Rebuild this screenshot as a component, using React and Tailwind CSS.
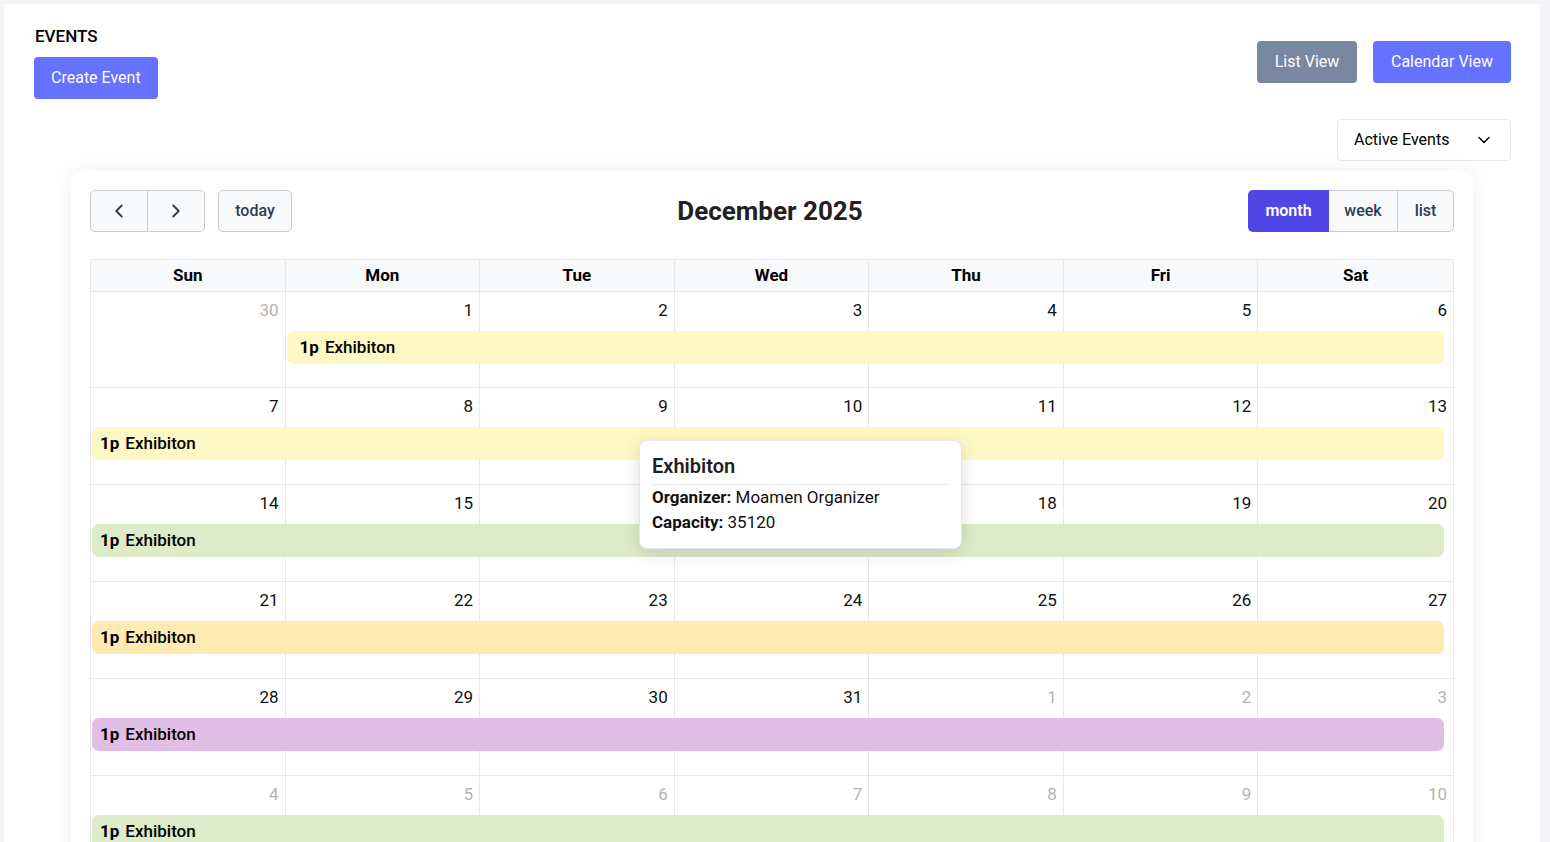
import { ChevronLeft, ChevronRight, ChevronDown } from 'lucide-react';

const weeks = [
  { days: [[30, true], [1], [2], [3], [4], [5], [6]], start: 2, color: 'bg-[#fef8c4]' },
  { days: [[7], [8], [9], [10], [11], [12], [13]], start: 1, color: 'bg-[#fef8c4]' },
  { days: [[14], [15], [16], [17], [18], [19], [20]], start: 1, color: 'bg-[#ddebc8]' },
  { days: [[21], [22], [23], [24], [25], [26], [27]], start: 1, color: 'bg-[#ffeab2]' },
  { days: [[28], [29], [30], [31], [1, true], [2, true], [3, true]], start: 1, color: 'bg-[#e0bee6]' },
  { days: [[4, true], [5, true], [6, true], [7, true], [8, true], [9, true], [10, true]], start: 1, color: 'bg-[#ddebc8]' },
];

const dayNames = ['Sun', 'Mon', 'Tue', 'Wed', 'Thu', 'Fri', 'Sat'];

// one week row: cells + the spanning event bar in the same grid area
function WeekRow({ week, first }) {
  return (
    <div className={`grid grid-cols-7 border-b border-[#e5e7eb] ${first ? 'h-[96px]' : 'h-[97px]'}`}>
      {week.days.map(([n, other], i) => (
        <div
          key={i}
          className={`row-start-1 h-full pr-[6px] pt-[6px] text-right text-[17px] leading-[24px] ${
            i < 6 ? 'border-r border-[#e5e7eb]' : ''
          } ${other ? 'text-[#b3b3b3]' : 'text-[#111]'}`}
          style={{ gridColumnStart: i + 1 }}
        >
          {n}
        </div>
      ))}
      <div
        className={`row-start-1 self-start mt-[39px] h-[33px] rounded-[7px] flex items-center text-[17px] text-black ${week.color} ${
          week.start === 2 ? 'col-start-2 col-span-6 ml-[1px] pl-[13px]' : 'col-start-1 col-span-7 ml-[1px] pl-[8px]'
        } mr-[9px]`}
      >
        <span className="font-bold mr-[6px]">1p</span>
        <span className="font-medium">Exhibiton</span>
      </div>
    </div>
  );
}

export default function App() {
  return (
    <div className="min-h-screen bg-[#f3f4f7] pt-[4px] pl-[4px] pr-[10px] font-['Roboto',sans-serif]">
      <div className="bg-white pl-[30px] pr-[29px] pt-[20px] pb-10">
        {/* header */}
        <div className="flex items-center justify-between">
          <div>
            <h1 className="text-[17px] leading-[24px] font-medium text-black pl-[1px]">EVENTS</h1>
            <button className="mt-[9px] h-[42px] px-[17px] rounded-[4px] bg-[#6571ff] text-white text-[16px]">
              Create Event
            </button>
          </div>
          <div className="flex gap-[16px]">
            <button className="h-[42px] w-[100px] rounded-[4px] bg-[#7987a1] text-white text-[16px]">List View</button>
            <button className="h-[42px] w-[138px] rounded-[4px] bg-[#6571ff] text-white text-[16px]">Calendar View</button>
          </div>
        </div>

        <div className="flex justify-end mt-[20px]">
          <div className="h-[42px] w-[174px] border border-[#e5e7eb] rounded-[4px] flex items-center justify-between pl-[16px] pr-[16px] text-[16px] text-black">
            <span>Active Events</span>
            <ChevronDown size={20} strokeWidth={1.75} />
          </div>
        </div>

        {/* calendar card */}
        <div className="relative mt-[10px] ml-[37px] mr-[38px] rounded-[10px] bg-white shadow-[0_0_22px_rgba(0,0,0,0.06)] px-[19px] pt-[19px] pb-[20px]">
          <div className="flex items-center justify-between h-[42px] mb-[27px]">
            <div className="flex gap-[13px]">
              <div className="flex">
                <button className="h-[42px] w-[58px] flex items-center justify-center bg-[#f8f9fa] border border-[#cccccc] rounded-l-[5px] text-[#2c3e50]">
                  <ChevronLeft size={22} strokeWidth={2} />
                </button>
                <button className="h-[42px] w-[57px] flex items-center justify-center bg-[#f8f9fa] border border-l-0 border-[#cccccc] rounded-r-[5px] text-[#2c3e50]">
                  <ChevronRight size={22} strokeWidth={2} />
                </button>
              </div>
              <button className="h-[42px] w-[74px] bg-[#f8f9fa] border border-[#cccccc] rounded-[5px] text-[16px] font-medium text-[#2c3e50]">
                today
              </button>
            </div>
            <h2 className="text-[26px] font-bold text-[#212121]">December 2025</h2>
            <div className="flex text-[16px]">
              <button className="h-[42px] w-[81px] bg-[#4f46e5] text-white font-semibold rounded-l-[5px]">month</button>
              <button className="h-[42px] w-[69px] bg-[#f8f9fa] border-y border-r border-[#cccccc] text-[#2c3e50] font-medium">week</button>
              <button className="h-[42px] w-[56px] bg-[#f8f9fa] border-y border-r border-[#cccccc] text-[#2c3e50] font-medium rounded-r-[5px]">list</button>
            </div>
          </div>

          <div className="border-l border-r border-t border-[#e5e7eb]">
            <div className="grid grid-cols-7 h-[32px] bg-[#f8f9fa] border-b border-[#e5e7eb]">
              {dayNames.map((d, i) => (
                <div
                  key={d}
                  className={`flex items-center justify-center text-[17px] font-bold text-black ${
                    i < 6 ? 'border-r border-[#e5e7eb]' : ''
                  }`}
                >
                  {d}
                </div>
              ))}
            </div>
            {weeks.map((w, i) => (
              <WeekRow key={i} week={w} first={i === 0} />
            ))}
          </div>

          {/* hover tooltip */}
          <div className="absolute left-[568px] top-[269px] w-[323px] bg-white border border-[#e5e7eb] rounded-[8px] shadow-[0_4px_18px_rgba(0,0,0,0.13)] px-[12px] pt-[12px] pb-[13px]">
            <div className="text-[20px] font-semibold text-[#1f1f1f] leading-[26px] pb-[5px] border-b border-[#e5e7eb]">
              Exhibiton
            </div>
            <div className="text-[17px] leading-[25px] text-[#111]">
              <div>
                <span className="font-bold">Organizer:</span> Moamen Organizer
              </div>
              <div>
                <span className="font-bold">Capacity:</span> 35120
              </div>
            </div>
          </div>
        </div>
      </div>
    </div>
  );
}
